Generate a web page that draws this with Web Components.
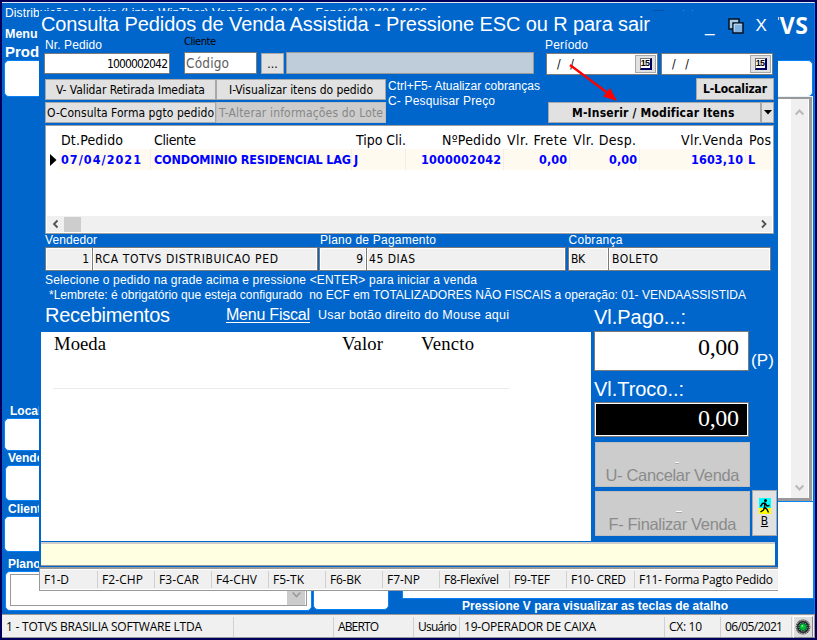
<!DOCTYPE html>
<html lang="pt-BR">
<head>
<meta charset="utf-8">
<title>Consulta Pedidos de Venda Assistida</title>
<style>
  html, body { margin: 0; width: 817px; height: 640px; overflow: hidden; background: #00005c; }
  body { --blue: #0066cc; --tahoma: "DejaVu Sans Condensed", "DejaVu Sans", sans-serif; --arial: "Liberation Sans", Arial, sans-serif; --segoe: "Open Sans", "Noto Sans", sans-serif; }
</style>
</head>
<body>
<pos-app></pos-app>
<script>
const define = (name, html, after) => customElements.define(name, class extends HTMLElement {
  constructor() {
    super();
    this.attachShadow({ mode: 'open' }).innerHTML = '<style>*{box-sizing:border-box}</style>' + html;
  }
  connectedCallback() { if (after) after(this); }
});

define('pos-app', `<style>
  :host { display: block; position: relative; width: 817px; height: 640px; background: #00005c; }
  .dlg { position: absolute; left: 39px; top: 11px; }
</style>
<main-window></main-window><sale-dialog class="dlg"></sale-dialog>`);

define('main-window', `<style>
  :host { display: flex; flex-direction: column; height: 640px; padding: 2px 2px 1px 2px; font-family: var(--arial); color: #fff; }
  .client { height: 612px; background: var(--blue); border-top: 1px solid #dfe9f5; border-right: 1px solid #0a7cf0; display: flex; flex-direction: column; }
  .title { height: 18px; padding: 1px 0 0 3px; font-size: 12px; line-height: 18px; display: flex; }
  .title svg { margin-left: 220px; margin-top: 3px; }
  .head { height: 39px; display: flex; justify-content: space-between; padding: 0 6px 0 3px; }
  .head b { display: block; font-size: 12.5px; line-height: 14px; margin-top: 6px; }
  .head b + b { font-size: 15px; line-height: 18px; margin-top: 2px; }
  .brand { font: 700 23px/24px "Noto Sans", sans-serif; margin-top: -8px; }
  .wide { height: 37px; margin: 0 1px 0 2px; border-radius: 5px; background: #fff; border: 1px solid #0a80f5; }
  .mid { display: flex; justify-content: space-between; height: 405px; }
  .left { width: 300px; display: flex; flex-direction: column; padding-top: 307px; font: 700 12px/14px var(--arial); }
  .left b { height: 14px; padding-left: 8px; }
  .box { background: #fff; border: 1px solid #0a80f5; border-radius: 5px; margin-left: 3px; flex: none; }
  .list { width: 100px; margin-top: 0; height: 404px; background: #fff; border: 2px solid #999; border-width: 2px 3px 3px 0; outline: 1px solid #e8f0f8; display: flex; justify-content: flex-end; margin-right: 2px; }
  .list .bar { width: 17px; background: #f0f0f0; display: flex; flex-direction: column; justify-content: space-between; align-items: center; padding: 9px 0 6px; margin-right: 1px; }
  .low { flex: 1; display: grid; grid-template-columns: 310px 77px 13px 1fr; }
  .lc { display: flex; flex-direction: column; font: 700 12px/14px var(--arial); }
  .lc b { padding-left: 6px; }
  .combo { margin: 2px 4px; border: 1px solid #999; height: 32px; display: flex; justify-content: flex-end; }
  .combo i { width: 18px; background: #ccc; margin-right: 1px; display: flex; align-items: center; justify-content: center; }
  .right { display: flex; flex-direction: column; }
  .right .pan { height: 98px; background: #fff; border: 1px solid #0a80f5; }
  .hint { font: 700 12px/15px var(--arial); padding-left: 60px; }
</style>
<div class="client">
  <div class="title"><fit-text w="422">Distribuição e Varejo (Linha WinThor) Versão 28.0.01.6 - Fone:(31)3404-4466</fit-text>
    <svg width="60" height="10"><path d="M7 8V4.500h9V8z" fill="#fff" stroke="#112" stroke-width="1.6"/><path d="M36 4l5 6M46 4l-5 6" stroke="#fff" stroke-width="1.4"/></svg></div>
  <div class="head"><div><b>Menu</b><b>Produto</b></div><fit-text w="74" class="brand">TOTVS</fit-text></div>
  <div class="wide"></div>
  <div class="mid">
    <div class="left">
      <b><fit-text>Local</fit-text></b><div class="box" style="height:33px;margin-left:2px"></div>
      <b style="padding-left:6px">Vendedor</b><div class="box" style="height:36px"></div>
    </div>
    <div class="list"><div class="bar"><svg width="9" height="8"><path d="M.7 6.5L4.5 2.5L8.3 6.5" fill="none" stroke="#b9b9b9" stroke-width="2"/></svg><svg width="9" height="8"><path d="M.7 1.5L4.5 5.5L8.3 1.5" fill="none" stroke="#b9b9b9" stroke-width="2"/></svg></div></div>
  </div>
  <div class="low">
    <div class="lc"><b style="margin-top:1px">Cliente</b><div class="box" style="height:36px;margin-left:2px">
      </div><b style="margin-top:5px">Plano</b><div class="box" style="height:40px;margin-top:0"><div class="combo"><i><svg width="9" height="8" style="margin-top:10px"><path d="M.7 1.5L4.5 5.5L8.3 1.5" fill="none" stroke="#999" stroke-width="1.6"/></svg></i></div></div></div>
    <div class="box" style="height:109px;margin-left:1px"></div><div></div>
    <div class="right"><div class="pan"></div><div class="hint"><fit-text w="266">Pressione V para visualizar as teclas de atalho</fit-text></div></div>
  </div>
</div>
<status-bar></status-bar>`);

define('status-bar', `<style>
  :host { display: grid; grid-template-columns: 232px 100px 80px 46px 205px 56px 71px 1fr; height: 24px; background: #f0f0f0; border: 1px solid #999; border-width: 1px 1px 1px 0; color: #000; font: 12px/22px var(--segoe); }
  span { border-right: 1px solid #d0d0d0; margin: 2px 0; line-height: 20px; padding-left: 4px; white-space: nowrap; }
  i { margin: 1px; background:#ddd; border: 1px solid #fff; border-right-color:#888; border-bottom-color:#888; display: grid; place-items: center; }
</style>
<span><fit-text w="196">1 - TOTVS BRASILIA SOFTWARE LTDA</fit-text></span><span></span><span><fit-text w="41">ABERTO</fit-text></span><span><fit-text w="39">Usuário</fit-text></span><span><fit-text w="132">19-OPERADOR DE CAIXA</fit-text></span><span><fit-text w="33">CX: 10</fit-text></span><span><fit-text w="58">06/05/2021</fit-text></span>
<i><svg width="16" height="16" viewBox="0 0 16 16"><circle cx="8" cy="8" r="7.4" fill="#444"/><circle cx="8" cy="8" r="6.7" fill="none" stroke="#eee" stroke-dasharray="1 1"/><circle cx="8" cy="8" r="4.8" fill="#063" stroke="#111" stroke-width="1.2"/><circle cx="8" cy="8" r="4.3" fill="none" stroke="#bbb" stroke-dasharray="1.4 1" stroke-width=".8"/><circle cx="8" cy="8" r="3" fill="#0b3"/><circle cx="7.3" cy="7" r="1" fill="#7f7"/></svg></i>`);

define('ui-button', `<style>
  :host { display: flex; align-items: center; justify-content: center; box-sizing: border-box; background: #e1e1e1; border: 1px solid #a8a8a8; color: #000; font: 12px/14px var(--tahoma); white-space: nowrap; }
  :host([disabled]) { background: #cccccc; border-color: #bfbfbf; color: #878787; }
</style><slot></slot>`);

define('ui-field', `<style>
  :host { display: flex; align-items: center; box-sizing: border-box; background: #fff; border: 1px solid #7a7a7a; color: #000; font: 12px/14px var(--tahoma); white-space: nowrap; }
  :host([ro]) { background: #f0f0f0; box-shadow: inset -1px -1px #fff, inset 1px 1px #fff; }
  :host([end]) { justify-content: flex-end; }
</style><slot></slot>`);

define('date-field', `<style>
  :host { display: flex; box-sizing: border-box; height: 22px; width: 112px; background: #fff; border: 1px solid #7a7a7a; color: #000; justify-content: space-between; padding: 1px; font: 12px/18px var(--tahoma); }
  span { padding-left: 9px; white-space: pre; }
  div { width: 21px; height: 18px; background: #e1e1e1; border: 1px solid #a8a8a8; display: grid; place-items: center; }
  b { width: 12px; height: 12px; background: #fff; border: 1px solid #000; border-color: #777 #00005c #00005c #777; border-right-width: 2px; border-bottom-width: 2px; font: 700 9px/9px var(--arial); text-align: center; letter-spacing: -.8px; }
</style><span><fit-text w="17">/  /</fit-text></span><div><b>15</b></div>`);

define('order-grid', `<style>
  :host { display: flex; flex-direction: column; box-sizing: border-box; height: 109px; width: 729px; background: #fff; border: 1px solid #a0a0a0; color: #000; font: 14px/18px var(--tahoma); }
  .r { display: grid; grid-template-columns: 13px 92px 201px 54px 98px 66px 70px 106px 1fr; }
  .h { height: 23px; padding-top: 5px; }
  .r > * { white-space: nowrap; display: flex; }
  .e { justify-content: flex-end; padding-right: 3px; }
  .d { height: 19px; margin-right: 1px; font: 700 12.5px/21px var(--tahoma); color: #00f; }
  .d > *:not(:first-child) { background: #fffaf0; border-right: 1px solid #efefef; padding-left: 2px; }
  .d > *:last-child { border: 0 !important; }
  .d > *:first-child { align-items: center; padding-left: 4px; }
  .sc { height: 16px; margin: auto 1px 1px; background: #f0f0f0; display: flex; align-items: center; }
  .sc i { width: 17px; height: 15px; background: #cdcdcd; }
</style>
<div class="r h"><span></span><span style="padding-left:2px"><fit-text w="62">Dt.Pedido</fit-text></span><span style="padding-left:3px"><fit-text w="42">Cliente</fit-text></span><span style="padding-left:4px"><fit-text w="50">Tipo Cli.</fit-text></span><span class="e"><fit-text w="59">NºPedido</fit-text></span><span style="padding-left:3px"><fit-text w="60">Vlr. Frete</fit-text></span><span style="padding-left:3px"><fit-text w="63">Vlr. Desp.</fit-text></span><span class="e" ><fit-text w="62">Vlr.Venda</fit-text></span><span style="padding-left:3px"><fit-text w="22">Pos</fit-text></span></div>
<div class="r d"><span><svg width="7" height="12"><path d="M0 0L6.5 6L0 12z"/></svg></span><span><fit-text w="80">07/04/2021</fit-text></span><span style="padding-left:3px"><fit-text w="197">CONDOMINIO RESIDENCIAL LAG</fit-text></span><span><fit-text>J</fit-text></span><span class="e" style="padding-right:2px"><fit-text w="80">1000002042</fit-text></span><span class="e" style="padding-right:2px"><fit-text w="28">0,00</fit-text></span><span class="e" style="padding-right:2px"><fit-text w="28">0,00</fit-text></span><span class="e" style="padding-right:2px"><fit-text w="52">1603,10</fit-text></span><span>L</span></div>
<div class="sc"><svg width="17" height="16"><path d="M10.500 4.5L7 8L10.500 11.5" fill="none" stroke="#505050" stroke-width="1.8"/></svg><i></i><svg width="17" height="16" style="margin-left:auto"><path d="M7 4.5L10.500 8L7 11.500" fill="none" stroke="#505050" stroke-width="1.8"/></svg></div>`);

define('function-keys', `<style>
  :host { display: grid; box-sizing: border-box; grid-template-columns: 58px 57px 57px 57px 57px 57px 57px 70px 57px 68px 1fr; height: 24px; width: 739px; background: #f0f0f0; border: 1px solid #999; border-width: 2px 0 1px 1px; box-shadow: inset 0 1px #fff, inset 0 -1px #fff; color: #000; font: 12px/16px var(--segoe); }
  span { margin: 2px 0; padding: 0 0 0 4px; line-height: 17px; border-right: 1px solid #d0d0d0; white-space: nowrap; }
  span:first-child { padding-left: 2px; }
  span:last-child { border: 0; }
</style>` + [['F1-D',25],['F2-CHP',41],['F3-CAR',40],['F4-CHV',41],['F5-TK',31],['F6-BK',31],['F7-NP',33],['F8-Flexível',55],['F9-TEF',36],['F10- CRED',55],['F11- Forma Pagto Pedido',134]].map(([t, w]) => `<span><fit-text w="${w}">${t}</fit-text></span>`).join(''));

define('payment-list', `<style>
  :host { display: block; box-sizing: border-box; width: 550px; height: 209px; background: #fff; color: #000; padding: 0 0 0 12px; font: 18.7px/22px "Liberation Serif", serif; }
  .h { display: grid; grid-template-columns: 288px 79px 1fr; width: 456px; height: 57px; border-bottom: 1px solid #ebebeb; padding: 1px 0 0 1px; }
</style><div class="h"><span><fit-text w="52">Moeda</fit-text></span><span><fit-text w="41">Valor</fit-text></span><span><fit-text w="53">Vencto</fit-text></span></div>`);

define('payment-totals', `<style>
  :host { display: flex; flex-direction: column; width: 184px; color: #fff; font: 20px/24px var(--arial); }
  .r { display: flex; }
  .v { width: 155px; font: 24px/30px "Liberation Serif", serif; padding-right: 9px; align-items: flex-start; }
  .big { width: 155px; height: 45px; margin-left: 1px; align-items: flex-end; font: 200 16.5px/18px "Liberation Sans"; padding-bottom: 2px; position: relative; color: #8b8b8b; }
  .big i { position: absolute; left: 79px; top: 19px; width: 4px; height: 2px; background: #fff; border-bottom: 1px solid #aaa; }
  .run { width: 25px; height: 46px; margin: -1px 0 0 2px; flex-direction: column; font-size: 12px; }
</style>
<div><fit-text w="92">Vl.Pago...:</fit-text></div>
<div class="r" style="margin-top:2px"><ui-field class="v" end style="height:40px"><fit-text w="41">0,00</fit-text></ui-field><fit-text w="23" style="font-size:17px;line-height:20px;margin:20px 0 0 2px">(P)</fit-text></div>
<div style="margin-top:6px"><fit-text w="90">Vl.Troco..:</fit-text></div>
<ui-field class="v" end style="height:35px;margin-top:1px;background:#000;color:#fff;box-shadow:inset 0 0 0 1px #fff"><fit-text w="41">0,00</fit-text></ui-field>
<ui-button disabled class="big" style="margin-top:5px"><i></i><fit-text w="134">U- Cancelar Venda</fit-text></ui-button>
<div class="r" style="margin-top:4px"><ui-button disabled class="big"><i style="width:6px;left:80px"></i><fit-text w="128">F- Finalizar Venda</fit-text></ui-button>
<ui-button class="run"><svg width="12" height="16" viewBox="0 0 12 16"><path d="M0 0h12v10H0z" fill="#0ff"/><path d="M0 10h12v6H0z" fill="#ff0"/><circle cx="6.500" cy="2.500" r="1.500"/><path d="M6 4.500L5.500 9L8 11.500L9.500 14.500M5.500 9L4.500 12L1.500 14M1.500 8.500L3.500 5.500L6 5L8 8L10.500 7.500" fill="none" stroke="#000" stroke-width="1.400"/></svg><u>B</u></ui-button></div>`);

define('sale-dialog', `<style>
  :host { display: flex; flex-direction: column; width: 739px; height: 580px; background: var(--blue); color: #fff; font: 12px/14px var(--arial); }
  .r { display: flex; flex: none; }
  .title { height: 30px; padding-left: 2px; font-size: 20px; line-height: 26px; }
  .title .n { margin: 3px 0 0 55px; font-size: 17px; }
  .title svg { margin: 7px 11px 0 14px; }
  .tag { height: 11px; padding-left: 6px; }
  .in { height: 23px; padding-left: 5px; align-items: flex-start; }
  .tools { margin-top: 3px; height: 47px; padding-left: 6px; display: grid; grid-template-columns: 341px 162px 1fr; }
  .bt { display: grid; grid-template-columns: 171px 170px; grid-template-rows: 21px 21px; row-gap: 2px; margin-top: 1px; align-content: start; }
  .rt { display: flex; flex-direction: column; align-items: flex-end; gap: 2px; padding-right: 5px; }
  .rt b, ui-button.b { font-weight: 700; }
  .lab { display: grid; grid-template-columns: 275px 248.500px 1fr; padding-left: 6px; height: 14px; margin-top: -1px; }
  .ro { padding-left: 6px; }
  .ro ui-field { height: 24px; padding: 0 3px 0 2px; }
  .arrow { position: absolute; left: 528px; top: 50px; }
  u { text-decoration: none; border-bottom: 1px solid #fff; height: 17px; }
</style>
<div class="r title"><fit-text w="609">Consulta Pedidos de Venda Assistida - Pressione ESC ou R para sair</fit-text><span class="n">_</span>
  <svg width="16" height="16" viewBox="0 0 16 16"><rect x="1" y="1" width="10" height="10" fill="#a9cbe8" stroke="#001020" stroke-width="1.500"/><rect x="5" y="5" width="10" height="10" fill="#7fb2e0" stroke="#001020" stroke-width="1.500"/><path d="M6.200 13.500V6.200h7.600" fill="none" stroke="#c8e0f4"/></svg><span class="n" style="margin-left:0;margin-top:2px">X</span></div>
<div class="r tag"><fit-text w="57" style="margin:-3px 82px 0 0">Nr. Pedido</fit-text><fit-text w="32" style="margin:-6px 329px 0 0;color:#000;font:11px/14px var(--tahoma)">Cliente</fit-text><fit-text w="43" style="margin-top:-3px">Período</fit-text></div>
<div class="r in">
  <ui-field end style="width:126px;height:21px;margin-top:1px;padding-right:1px"><fit-text w="61">1000002042</fit-text></ui-field>
  <ui-field style="width:73px;height:22px;margin-left:14px;padding-left:1px;font-size:13.500px;color:#606060"><fit-text w="43">Código</fit-text></ui-field>
  <ui-button style="width:23px;height:21px;margin:1px 2px 0 4px">...</ui-button>
  <ui-field style="width:248px;height:22px;background:#bfcddb;border-color:#999"></ui-field>
  <date-field style="margin:1px 3px 0 12px"></date-field><date-field style="margin-top:1px"></date-field>
</div>
<div class="tools">
  <div class="bt"><ui-button><fit-text w="149">V- Validar Retirada Imediata</fit-text></ui-button><ui-button><fit-text w="144">I-Visualizar itens do pedido</fit-text></ui-button><ui-button><fit-text w="167">O-Consulta Forma pgto pedido</fit-text></ui-button><ui-button disabled><fit-text w="164">T-Alterar informações do Lote</fit-text></ui-button></div>
  <div style="padding:1px 0 0 2px;line-height:15px"><fit-text w="152">Ctrl+F5- Atualizar cobranças</fit-text><br><fit-text w="107">C- Pesquisar Preço</fit-text></div>
  <div class="rt"><ui-button class="b" style="width:78px;height:22px"><fit-text w="64">L-Localizar</fit-text></ui-button>
    <div class="r"><ui-button class="b" style="width:213px;height:21px;padding-right:3px"><fit-text w="162">M-Inserir / Modificar Itens</fit-text></ui-button><ui-button style="width:13px;height:21px"><svg width="8" height="5"><path d="M0 0h8L4 4.500z"/></svg></ui-button></div></div>
</div>
<order-grid style="margin:0 0 0 6px;flex:none"></order-grid>
<div class="lab"><fit-text w="52">Vendedor</fit-text><fit-text w="116">Plano de Pagamento</fit-text><fit-text w="54">Cobrança</fit-text></div>
<div class="r ro"><ui-field ro end style="width:48px">1</ui-field><ui-field ro style="width:226px;margin-left:-1px"><fit-text w="183">RCA TOTVS DISTRIBUICAO PED</fit-text></ui-field>
 <ui-field ro end style="width:48px;margin-left:1px">9</ui-field><ui-field ro style="width:200px;margin-left:-1px"><fit-text w="46">45 DIAS</fit-text></ui-field>
 <ui-field ro style="width:41px;margin-left:2px"><fit-text w="14">BK</fit-text></ui-field><ui-field ro style="width:163px;margin-left:-1px;padding-left:3px"><fit-text w="46">BOLETO</fit-text></ui-field></div>
<div class="r" style="padding:2px 0 0 6px;height:17px"><fit-text w="432">Selecione o pedido na grade acima e pressione &lt;ENTER&gt; para iniciar a venda</fit-text></div>
<div class="r" style="padding-left:10px;height:14px"><fit-text w="697">*Lembrete: é obrigatório que esteja configurado  no ECF em TOTALIZADORES NÃO FISCAIS a operação: 01- VENDAASSISTIDA</fit-text></div>
<div class="r" style="height:241px">
  <div style="padding-left:2px;width:555px">
    <div class="r" style="height:30px;padding-left:4px"><fit-text w="125" style="font-size:20px;line-height:26px;margin-right:56px">Recebimentos</fit-text><u style="margin-top:4px"><fit-text w="84" style="font-size:16px;line-height:18px">Menu Fiscal</fit-text></u><fit-text w="191" style="font-size:12.500px;margin:6px 0 0 8px">Usar botão direito do Mouse aqui</fit-text></div>
    <payment-list></payment-list>
  </div>
  <payment-totals style="margin-top:3px"></payment-totals>
</div>
<div style="height:24px;margin:-1px 3px 0 2px;background:#ffffe1;border-top:2px solid #ccc;border-bottom:1px solid #999;flex:none"></div>
<function-keys style="margin-top:auto"></function-keys>
<svg class="arrow" width="56" height="44"><path d="M3 4L42 33" stroke="#f00" stroke-width="2.200"/><path d="M50 40L36 35.500L43 27z" fill="#f00"/></svg>`);

// Text run spread to an exact advance width with letter-spacing.
define('fit-text', `<style>:host { display: inline-block; white-space: pre; flex: none; }</style><slot></slot>`, el => {
  const w = parseFloat(el.getAttribute('w'));
  if (!w) return;
  const n = el.textContent.length;
  const range = document.createRange();
  range.selectNodeContents(el);
  const natural = range.getBoundingClientRect().width;
  el.style.letterSpacing = ((w - natural) / (n - 1)).toFixed(3) + 'px';
  el.style.width = w + 'px';
});
</script>
</body>
</html>
